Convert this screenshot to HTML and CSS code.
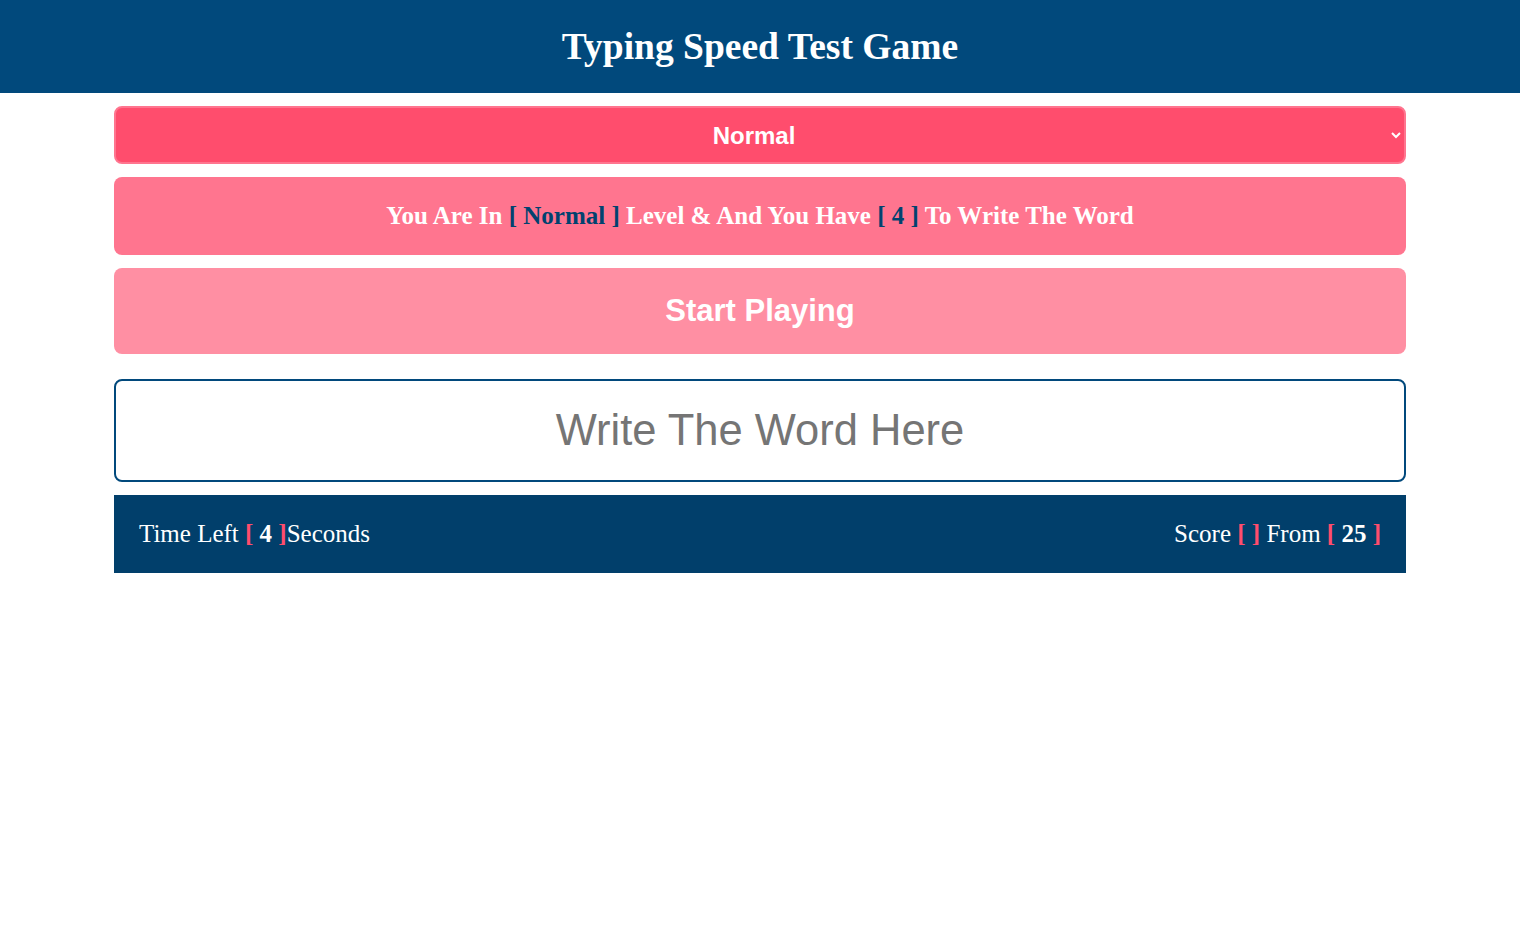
FILE: index.html
```html
<!DOCTYPE html>
<html lang="en">
<head>
<meta charset="utf-8">
<title>Typing Speed Test Game</title>
<link rel="stylesheet" href="styles.css">
</head>
<body>
<header class="top">
  <h1 class="title">Typing Speed Test Game</h1>
</header>
<main class="game">
  <select class="level">
    <option>Easy</option>
    <option selected>Normal</option>
    <option>Hard</option>
  </select>
  <div class="message">You Are In <span class="mark">[ <span>Normal</span> ]</span> Level &amp; And You Have <span class="mark">[ <span>4</span> ]</span> To Write The Word</div>
  <div class="start">Start Playing</div>
  <input class="input" type="text" placeholder="Write The Word Here">
  <div class="control">
    <div class="time">Time Left <span class="br">[</span> <b>4</b> <span class="br">]</span>Seconds</div>
    <div class="score">Score <span class="br">[</span> <span class="br">]</span> From <span class="br">[</span> <b>25</b> <span class="br">]</span></div>
  </div>
</main>
</body>
</html>
```
FILE: styles.css
```css
* { box-sizing: border-box; }
body {
  margin: 0;
  font-family: "Liberation Serif", "Times New Roman", serif;
  background: #fff;
}
.top {
  background: #01497c;
  height: 93px;
  display: flex;
  align-items: center;
  justify-content: center;
}
.title {
  margin: 0 0 1px;
  color: #fff;
  font-size: 37.5px;
  font-weight: bold;
}
.game {
  width: 1292px;
  margin: 13px auto 0;
  display: flex;
  flex-direction: column;
}
.level {
  height: 58px;
  background: #ff4d6d;
  border: 2px solid #ff758f;
  border-radius: 8px;
  color: #fff;
  font-family: "Liberation Sans", Arial, sans-serif;
  font-weight: bold;
  font-size: 24px;
  text-align: center;
  text-align-last: center;
  outline: none;
}
.message {
  margin-top: 13px;
  height: 78px;
  background: #ff758f;
  border-radius: 8px;
  color: #fff;
  font-weight: bold;
  font-size: 25px;
  display: flex;
  align-items: center;
  justify-content: center;
  white-space: pre;
}
.message .mark { color: #01426f; }
.start {
  margin-top: 13px;
  height: 86px;
  background: #ff8fa3;
  border-radius: 8px;
  color: #fff;
  font-family: "Liberation Sans", Arial, sans-serif;
  font-weight: bold;
  font-size: 31px;
  display: flex;
  align-items: center;
  justify-content: center;
}
.input {
  margin-top: 25px;
  height: 103px;
  border: 2px solid #01497c;
  border-radius: 8px;
  font-family: "Liberation Sans", Arial, sans-serif;
  font-size: 43.5px;
  text-align: center;
  outline: none;
}
.input::placeholder { color: #757575; }
.control {
  margin-top: 13px;
  height: 78px;
  background: #013f6b;
  color: #fff;
  font-size: 25px;
  padding: 0 25px;
  display: flex;
  align-items: center;
  justify-content: space-between;
}
.br { color: #ff4d6d; font-weight: bold; }
.control b { font-weight: bold; }
```
